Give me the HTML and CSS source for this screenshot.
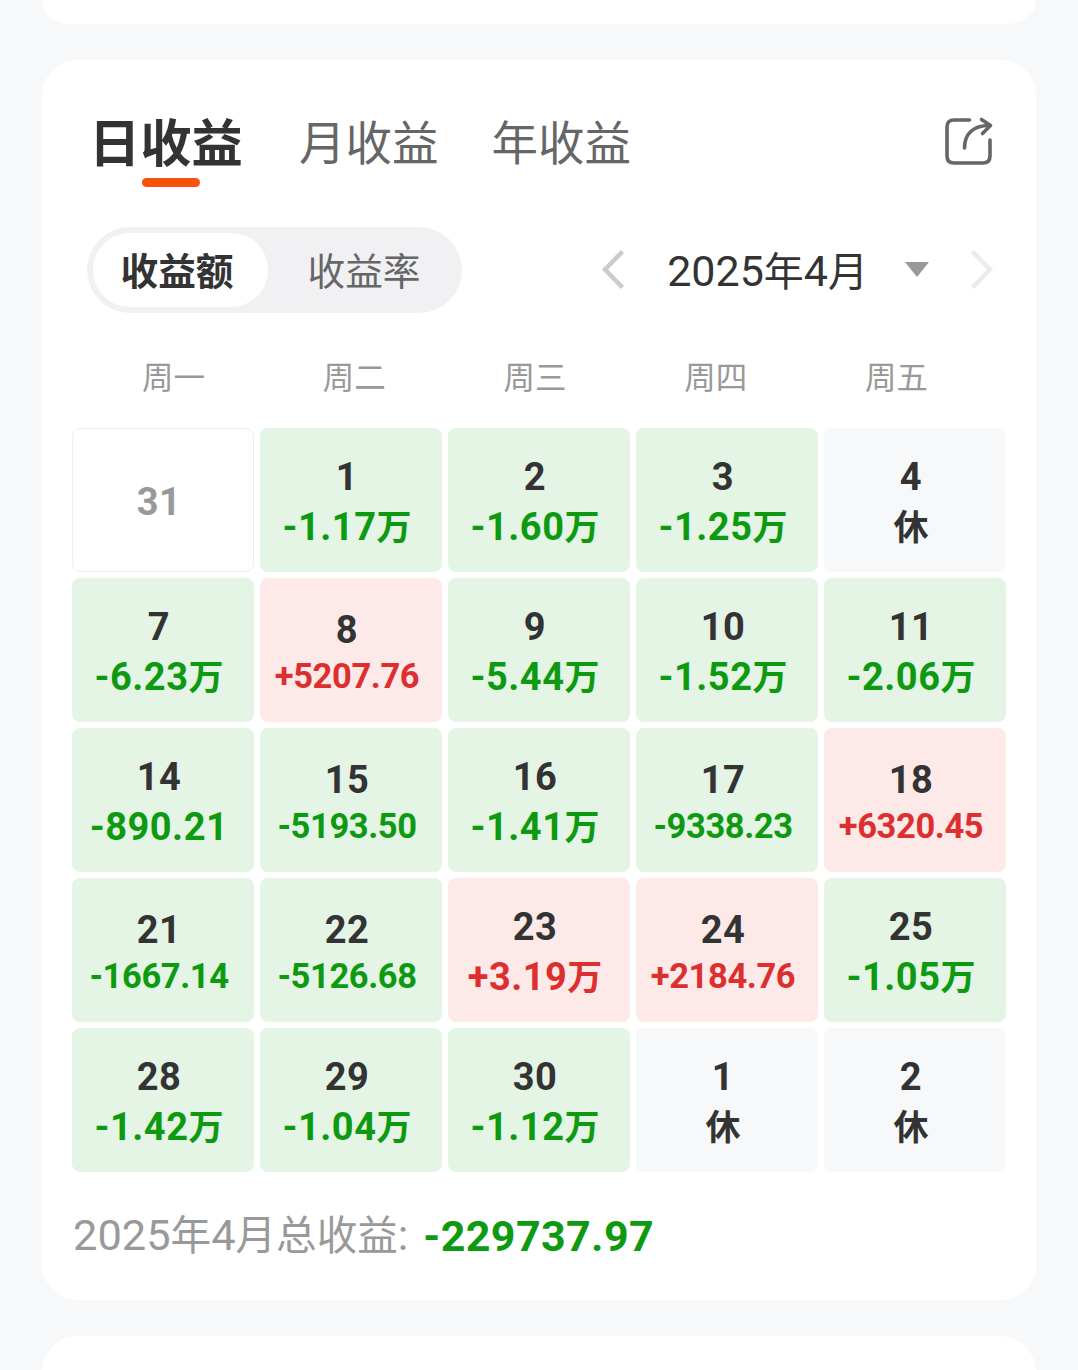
FILE: index.html
```html
<!DOCTYPE html>
<html lang="zh-CN">
<head>
  <meta charset="UTF-8">
  <meta name="viewport" content="width=device-width, initial-scale=1.0">
  <title>日收益</title>
  <link rel="stylesheet" href="styles.css">
</head>
<body>
  <div class="card card-prev"></div>

  <div class="card card-main">
    <!-- Tabs -->
    <div class="tabs">
      <div class="tab active">日收益</div>
      <div class="tab">月收益</div>
      <div class="tab">年收益</div>
      <svg class="share" width="52" height="52" viewBox="0 0 52 52" fill="none" stroke="#666" stroke-width="3.6" stroke-linecap="round" stroke-linejoin="round">
        <path d="M26.500 4H11Q4 4 4 11V40Q4 47 11 47H40Q47 47 47 40V24"/>
        <path d="M21.500 32C21.500 18 30 9.500 46 9.500"/>
        <path d="M38.500 3.500L47.500 9.500L39.500 17.500"/>
      </svg>
    </div>

    <!-- Amount / rate switch and month picker -->
    <div class="toolbar">
      <div class="switch">
        <div class="option selected">收益额</div>
        <div class="option">收益率</div>
      </div>
      <div class="month">
        <svg width="24" height="40" viewBox="0 0 24 40" fill="none" stroke="#ccc" stroke-width="4.500"><path d="M21.500 1.500L4 19.500L21.500 37.500"/></svg>
        <div class="month-text"><b>2025</b>年<b>4</b>月</div>
        <svg class="caret" width="24" height="15" viewBox="0 0 24 15"><path d="M0 0H24L12 15Z" fill="#999"/></svg>
        <svg width="24" height="40" viewBox="0 0 24 40" fill="none" stroke="#ebebeb" stroke-width="4.500"><path d="M2.500 1.500L20 19.500L2.500 37.500"/></svg>
      </div>
    </div>

    <!-- Calendar -->
    <div class="week">
      <div>周一</div>
      <div>周二</div>
      <div>周三</div>
      <div>周四</div>
      <div>周五</div>
    </div>
    <div class="calendar">
      <div class="cell out"><div class="day">31</div></div>
      <div class="cell loss"><div class="day">1</div><div class="amount">-1.17<i>万</i></div></div>
      <div class="cell loss"><div class="day">2</div><div class="amount">-1.60<i>万</i></div></div>
      <div class="cell loss"><div class="day">3</div><div class="amount">-1.25<i>万</i></div></div>
      <div class="cell rest"><div class="day">4</div><div class="amount"><i>休</i></div></div>

      <div class="cell loss"><div class="day">7</div><div class="amount">-6.23<i>万</i></div></div>
      <div class="cell gain"><div class="day">8</div><div class="amount small">+5207.76</div></div>
      <div class="cell loss"><div class="day">9</div><div class="amount">-5.44<i>万</i></div></div>
      <div class="cell loss"><div class="day">10</div><div class="amount">-1.52<i>万</i></div></div>
      <div class="cell loss"><div class="day">11</div><div class="amount">-2.06<i>万</i></div></div>

      <div class="cell loss"><div class="day">14</div><div class="amount">-890.21</div></div>
      <div class="cell loss"><div class="day">15</div><div class="amount small">-5193.50</div></div>
      <div class="cell loss"><div class="day">16</div><div class="amount">-1.41<i>万</i></div></div>
      <div class="cell loss"><div class="day">17</div><div class="amount small">-9338.23</div></div>
      <div class="cell gain"><div class="day">18</div><div class="amount small">+6320.45</div></div>

      <div class="cell loss"><div class="day">21</div><div class="amount small">-1667.14</div></div>
      <div class="cell loss"><div class="day">22</div><div class="amount small">-5126.68</div></div>
      <div class="cell gain"><div class="day">23</div><div class="amount">+3.19<i>万</i></div></div>
      <div class="cell gain"><div class="day">24</div><div class="amount small">+2184.76</div></div>
      <div class="cell loss"><div class="day">25</div><div class="amount">-1.05<i>万</i></div></div>

      <div class="cell loss"><div class="day">28</div><div class="amount">-1.42<i>万</i></div></div>
      <div class="cell loss"><div class="day">29</div><div class="amount">-1.04<i>万</i></div></div>
      <div class="cell loss"><div class="day">30</div><div class="amount">-1.12<i>万</i></div></div>
      <div class="cell rest"><div class="day">1</div><div class="amount"><i>休</i></div></div>
      <div class="cell rest"><div class="day">2</div><div class="amount"><i>休</i></div></div>
    </div>

    <div class="total">
      <div class="total-label"><b>2025</b>年<b>4</b>月总收益<b>:</b></div>
      <div class="total-value">-229737.97</div>
    </div>
  </div>

  <div class="card card-next"></div>
</body>
</html>
```

FILE: styles.css
```css
* {
  box-sizing: border-box;
}

body {
  margin: 0;
  height: 1370px;
  overflow: hidden;
  background: #f7f8fa;
  color: #333;
  font-family: Roboto, "Noto Sans CJK SC", sans-serif;
}

.card {
  margin: 0 42px;
  background: #fff;
  border-radius: 36px;
}

.card-prev {
  height: 24px;
  border-radius: 0 0 36px 36px / 0 0 30px 30px;
}

.card-main {
  height: 1240px;
  margin-top: 36px;
  margin-bottom: 36px;
  padding: 42px 30px 0;
}

.card-next {
  height: 80px;
}

/* tabs */
.tabs {
  display: flex;
  align-items: center;
  height: 80px;
  padding: 0 16px 0 17px;
}

.tab {
  position: relative;
  margin-right: 53px;
  padding-top: 4px;
  font-size: 46.5px;
  line-height: 80px;
  color: #666;
}

.tab.active {
  margin-right: 56px;
  padding-top: 6px;
  font-size: 51.3px;
  font-weight: bold;
  color: #333;
}

.tab.active::after {
  content: "";
  position: absolute;
  left: 53px;
  bottom: -2px;
  width: 58px;
  height: 9px;
  border-radius: 5px;
  background: #f9520b;
}

.share {
  margin-left: auto;
  margin-right: -5px;
}

/* toolbar */
.toolbar {
  display: flex;
  justify-content: space-between;
  align-items: center;
  height: 86px;
  margin-top: 45px;
  padding: 0 12px 0 15px;
}

.switch {
  display: flex;
  width: 375px;
  height: 86px;
  padding: 6px;
  border-radius: 43px;
  background: #f1f1f4;
}

.option {
  flex: none;
  width: 175px;
  height: 74px;
  margin-right: 12px;
  padding-right: 7px;
  border-radius: 37px;
  font-size: 37.7px;
  line-height: 78px;
  text-align: center;
  color: #666;
}

.option.selected {
  background: #fff;
  font-weight: bold;
  color: #333;
}

.month {
  display: flex;
  align-items: center;
}

.month-text {
  margin: 0 37px 0 42px;
  padding-top: 3px;
  font-size: 40px;
  line-height: 83px;
}

.month-text b,
.total-label b {
  font-weight: normal;
  font-size: 43px;
}

.caret {
  margin-top: -2px;
  margin-right: 41px;
}

/* calendar */
.week {
  display: grid;
  grid-template-columns: repeat(5, 1fr);
  margin: 42px 19px 0 11px;
  font-size: 31.5px;
  line-height: 48px;
  text-align: center;
  color: #999;
}

.calendar {
  display: grid;
  grid-template-columns: repeat(5, 182px);
  grid-auto-rows: 144px;
  gap: 6px;
  margin-top: 25px;
}

.cell {
  display: flex;
  flex-direction: column;
  justify-content: center;
  padding-top: 4px;
  padding-right: 8px;
  border-radius: 8px;
  text-align: center;
  font-weight: bold;
}

.day {
  font-size: 38px;
  line-height: 50px;
  letter-spacing: 0.5px;
}

.amount {
  height: 50px;
  font-size: 38px;
  line-height: 50px;
  letter-spacing: 0.5px;
  white-space: nowrap;
}

.amount i {
  font-style: normal;
  font-size: 35px;
  letter-spacing: 0;
}

.amount.small {
  height: 45px;
  font-size: 34.5px;
  line-height: 42px;
  letter-spacing: -0.4px;
}

.loss {
  background: #e4f4e5;
}

.loss .amount,
.total-value {
  color: #0d9a10;
}

.gain {
  background: #fde9e8;
}

.gain .amount {
  color: #dc2f2f;
}

.rest {
  background: #f7f8fa;
}

.out {
  border: 1px solid #eee;
  color: #999;
}

/* total */
.total {
  display: flex;
  align-items: center;
  margin-top: 29px;
  padding-left: 1px;
  line-height: 70px;
}

.total-label {
  font-size: 40.6px;
  color: #999;
}

.total-label b {
  font-size: 43.4px;
}

.total-value {
  margin-left: 15px;
  font-size: 43px;
  font-weight: bold;
  letter-spacing: 0.4px;
}
```
